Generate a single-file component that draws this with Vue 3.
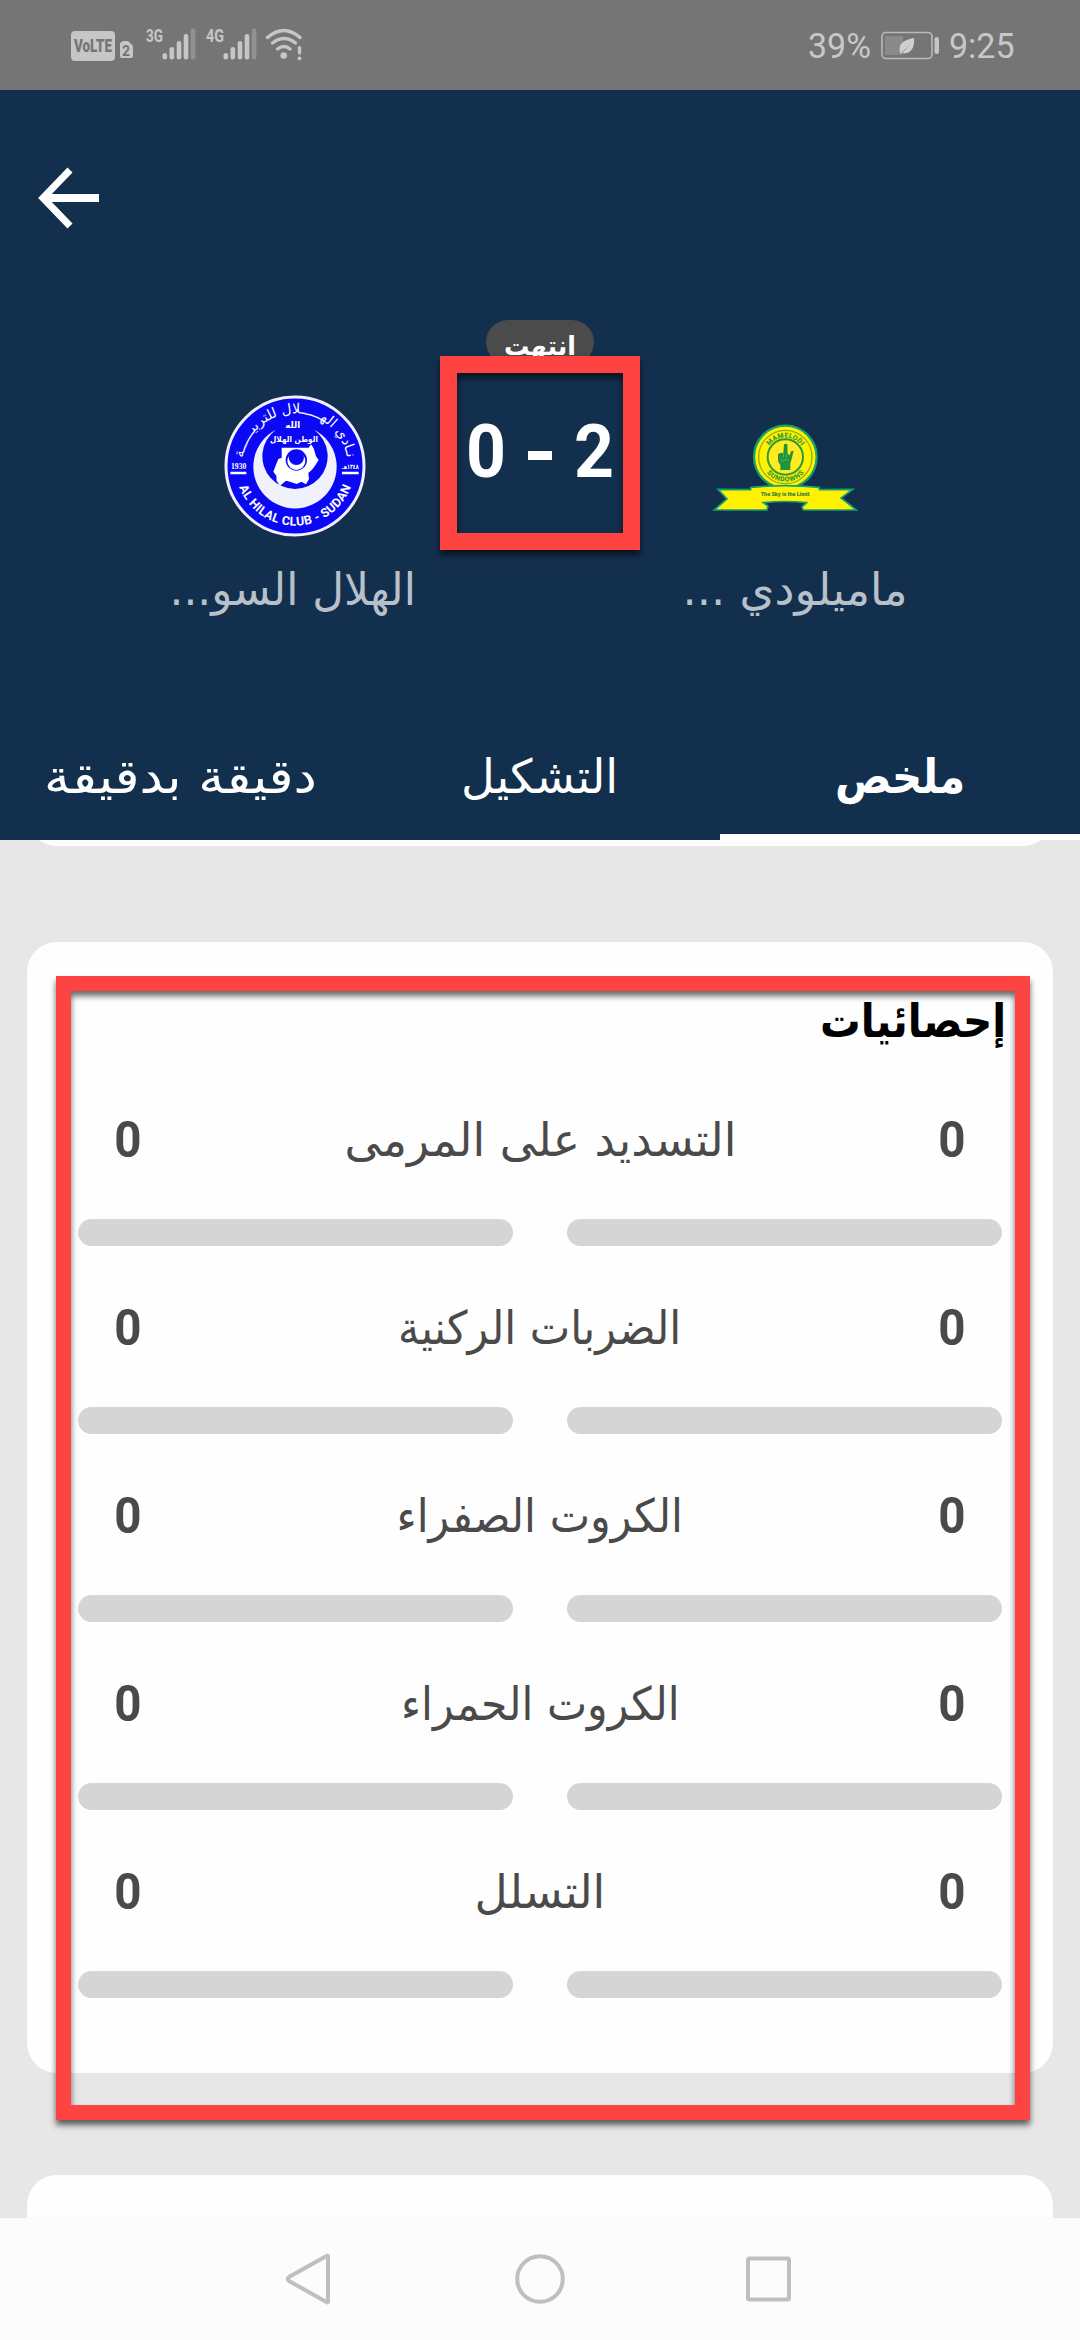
<script setup>
const tabs = [
  { label: 'ملخص', width: 130, active: true },
  { label: 'التشكيل', width: 157 },
  { label: 'دقيقة بدقيقة', width: 273 },
]
const stats = [
  { label: 'التسديد على المرمى', width: 392 },
  { label: 'الضربات الركنية', width: 283 },
  { label: 'الكروت الصفراء', width: 286 },
  { label: 'الكروت الحمراء', width: 279 },
  { label: 'التسلل', width: 131 },
]

// Stretches a label horizontally so that it takes the given width.
const vFit = {
  mounted(el, { value }) {
    el.style.transform = `scaleX(${value / el.offsetWidth})`
  },
}
</script>

<template>
  <div class="screen">
    <div class="status">
      <svg class="signals" width="236" height="40" viewBox="68 25 236 40">
        <g fill="#c6c6c6">
          <rect x="71" y="31" width="44" height="30" rx="4" />
          <path d="M120 43l3-2h5l5 5v10a2 2 0 0 1-2 2h-9a2 2 0 0 1-2-2z" />
          <g font-family="Roboto, sans-serif" font-weight="700">
            <text x="74" y="52" font-size="18" fill="#757575" textLength="38" lengthAdjust="spacingAndGlyphs" font-weight="900">VoLTE</text>
            <text x="122" y="56" font-size="14" fill="#757575">2</text>
            <text x="146" y="42" font-size="19" textLength="17" lengthAdjust="spacingAndGlyphs">3G</text>
            <text x="206" y="42" font-size="19" textLength="18" lengthAdjust="spacingAndGlyphs">4G</text>
          </g>
          <g v-for="x in [162, 223]" :key="x">
            <rect :x="x + 0.5" y="53" width="4.6" height="6.5" rx="2.2" />
            <rect :x="x + 7.5" y="47" width="4.6" height="12.5" rx="2.2" />
            <rect :x="x + 14.7" y="41" width="4.6" height="18.5" rx="2.2" />
            <rect :x="x + 21.7" y="34" width="4.6" height="25.5" rx="2.2" />
            <rect :x="x + 28.8" y="28.5" width="4.6" height="31" rx="2.2" fill="#919191" />
          </g>
          <circle cx="283.7" cy="55.5" r="3.3" />
          <rect x="297.8" y="46" width="3.4" height="8.5" rx="1.5" />
          <circle cx="299.5" cy="58.3" r="1.9" />
        </g>
        <g fill="none" stroke="#c6c6c6" stroke-width="3.4" stroke-linecap="round">
          <path d="M267.500 37.500Q284 23.500 300 37.500" />
          <path d="M272.500 43Q284 34 295.500 43" />
          <path d="M277.500 49Q284 44 290 49" />
        </g>
      </svg>
      <div class="power">
        <span v-fit="63">39%</span>
        <svg width="60" height="30" viewBox="880 31 60 30">
          <rect x="882" y="32.500" width="50" height="26" rx="4" fill="none" stroke="#b9b9b9" stroke-width="1.600" />
          <rect x="885" y="36" width="18" height="19" fill="#8a8a8a" />
          <path d="M900 53c-2-9 3-13 14-15 1 9-3 17-12 15l9-9-11 10z" fill="#cfcfcf" />
          <rect x="934.500" y="37" width="4.500" height="17" rx="2.200" fill="#c6c6c6" />
        </svg>
        <span v-fit="66">9:25</span>
      </div>
    </div>

    <header class="match">
      <svg class="back" width="64" height="64" viewBox="0 0 64 64" fill="none" stroke="#fff" stroke-width="7">
        <path d="M34 5L7 33L34 61" />
        <path d="M7 33H63" stroke-width="8" />
      </svg>

      <div class="teams" dir="rtl">
        <div class="team home">
          <svg width="190" height="130" viewBox="0 0 570 390">
            <circle cx="286" cy="168" r="94" fill="#fff200" stroke="#16a06a" stroke-width="7" />
            <circle cx="286" cy="168" r="80" fill="none" stroke="#8fae1e" stroke-width="4" />
            <circle cx="286" cy="168" r="53" fill="#ffeb1f" stroke="#2f9a3c" stroke-width="6" />
            <path id="sunTop" d="M228 168A58 58 0 0 1 344 168" fill="none" />
            <path id="sunBottom" d="M212 168A74 74 0 0 0 360 168" fill="none" />
            <g font-family="Roboto, sans-serif" font-weight="900" font-size="21" fill="#3c9a35" text-anchor="middle">
              <text><textPath href="#sunTop" startOffset="50%" textLength="112">MAMELODI</textPath></text>
              <text><textPath href="#sunBottom" startOffset="50%" textLength="128">SUNDOWNS</textPath></text>
            </g>
            <path d="M271 207V192L264 181V160L272 155L280 157L282 130Q287 126 292 130L293 158L299 163L303 151L311 149L306 170L301 187V207Z" fill="#1f9440" />
            <path d="M270 176l10 4 8-5 9 5M280 158l1 12M290 160l-1 10" fill="none" stroke="#8fc02c" stroke-width="2" />
            <path d="M182 259Q286 249 388 259V266L488 265L453 291L499 327H340L336 318L350 305Q284 298 220 305L234 315L231 327H73L111 294L84 265L182 266Z" fill="#fff200" stroke="#14a070" stroke-width="5" />
            <text x="285" y="284" font-family="Roboto, sans-serif" font-weight="900" font-size="18" fill="#33803a" text-anchor="middle" textLength="146" lengthAdjust="spacingAndGlyphs" direction="ltr">The Sky is the Limit</text>
          </svg>
          <span v-fit="225" class="name">ماميلودي ...</span>
        </div>

        <div class="result">
          <div class="badge"><span v-fit="72">انتهت</span></div>
          <div class="score" dir="ltr">
            <span>0</span><i></i><span>2</span>
          </div>
        </div>

        <div class="team away">
          <svg width="190" height="190" viewBox="0 0 570 570" direction="ltr">
            <g transform="translate(-15 0)">
              <circle cx="300" cy="291" r="207" fill="#0a08f5" stroke="#f2f0ff" stroke-width="9" />
              <path d="M228 182A125 125 0 1 0 342 182A98 98 0 1 1 228 182Z" transform="translate(15 0)" fill="#f1f1fb" />
              <g transform="translate(15 0)">
                <path d="M245 236H326L333 226L341 238L348 262L356 273L345 290L336 302L325 312L327 330L318 346L304 338L290 345L270 338L258 335L240 350L230 336L229 320L220 308L229 285L235 270L245 266Z" fill="#fff" />
                <circle cx="289" cy="273" r="32" fill="#0a08f5" />
                <circle cx="289" cy="276" r="27" fill="#fff" />
                <circle cx="289" cy="265" r="23" fill="#0a08f5" />
              </g>
              <path d="M106 312h48M441 312h50" stroke="#fff" stroke-width="7" />
              <path id="hilalTop" d="M142 291A158 158 0 0 1 458 291" fill="none" />
              <path id="hilalBottom" d="M121 291A179 179 0 0 0 479 291" fill="none" />
              <g fill="#fff" text-anchor="middle" font-weight="700">
                <text font-family="'DejaVu Sans', sans-serif" font-size="42" font-weight="400"><textPath href="#hilalTop" startOffset="50%">نـادي الهـــــلال للتربيـــــة</textPath></text>
                <text font-family="Roboto, sans-serif" font-size="37"><textPath href="#hilalBottom" startOffset="50%" textLength="434">AL HILAL CLUB - SUDAN</textPath></text>
                <text x="293" y="178" font-family="'DejaVu Sans', sans-serif" font-size="26">الله</text>
                <text x="297" y="220" font-family="'DejaVu Sans', sans-serif" font-size="25" textLength="144" lengthAdjust="spacingAndGlyphs">الوطن الهلال</text>
                <text x="131" y="301" font-family="'Liberation Serif', serif" font-size="23">1930</text>
                <text x="466" y="301" font-family="'DejaVu Sans', sans-serif" font-size="20" textLength="50" lengthAdjust="spacingAndGlyphs">١٣٤٨هـ</text>
              </g>
            </g>
          </svg>
          <span v-fit="246" class="name">الهلال السو...</span>
        </div>
      </div>

      <nav class="tabs" dir="rtl">
        <div v-for="t in tabs" :key="t.label" class="tab" :class="{ active: t.active }">
          <span v-fit="t.width">{{ t.label }}</span>
        </div>
      </nav>
    </header>

    <main class="content">
      <section class="card previous"></section>
      <section class="card stats" dir="rtl">
        <h2><span v-fit="186">إحصائيات</span></h2>
        <div v-for="s in stats" :key="s.label" class="stat">
          <div class="line">
            <b>0</b>
            <span v-fit="s.width" class="label">{{ s.label }}</span>
            <b>0</b>
          </div>
          <div class="bars"><i></i><i></i></div>
        </div>
      </section>
      <section class="card next"></section>
    </main>

    <footer class="navbar">
      <svg width="54" height="54" viewBox="0 0 54 54"><path d="M44 4.500V49.500Q44 51 42.500 50L5 29Q2.500 27 5 25L42.500 4Q44 3 44 4.500Z" /></svg>
      <svg width="54" height="54" viewBox="0 0 54 54"><circle cx="27" cy="27" r="22.800" /></svg>
      <svg width="54" height="54" viewBox="0 0 54 54"><rect x="7" y="6.500" width="41" height="41" rx="1.500" /></svg>
    </footer>

    <div class="mark mark-score"></div>
    <div class="mark mark-stats"></div>
  </div>
</template>

<style>
body {
  margin: 0;
}
</style>

<style scoped>
.screen {
  position: relative;
  display: flex;
  flex-direction: column;
  width: 1080px;
  height: 2340px;
  overflow: hidden;
  background: #e7e7e7;
  font-family: 'DejaVu Sans', sans-serif;
}
.screen span {
  display: inline-block;
  flex: none;
  white-space: nowrap;
}
.status {
  display: flex;
  justify-content: space-between;
  align-items: center;
  box-sizing: border-box;
  height: 90px;
  padding: 0 65px 0 68px;
  background: #757575;
  color: #c8c8c8;
  font: 35px/1 Roboto, sans-serif;
}
.power {
  display: flex;
  align-items: center;
  gap: 8px;
  padding-top: 2px;
}
.match {
  display: flex;
  flex-direction: column;
  height: 750px;
  background: #132f4e;
  color: #fff;
}
.back {
  flex: none;
  margin: 75px 0 0 36px;
}
.teams {
  display: flex;
  justify-content: space-between;
  height: 405px;
  padding: 0 170px;
}
.team {
  display: flex;
  flex-direction: column;
  align-items: center;
  justify-content: flex-end;
  width: 250px;
  height: 392px;
}
.team svg {
  flex: none;
}
.home svg {
  margin-bottom: 28px;
}
.home .name {
  margin-left: 20px;
}
.away .name {
  margin-right: 4px;
}
.name {
  color: #b8c1ca;
  font-size: 45px;
  line-height: 62px;
}
.result {
  display: flex;
  flex-direction: column;
  align-items: center;
  width: 200px;
  padding-top: 91px;
}
.badge {
  display: flex;
  justify-content: center;
  width: 108px;
  height: 44px;
  border-radius: 22px;
  background: #4b4b4b;
  font-weight: 700;
  font-size: 26px;
  line-height: 52px;
}
.score {
  display: flex;
  align-items: center;
  justify-content: center;
  gap: 20px;
  height: 80px;
  margin-top: 47px;
  font: 700 75px/80px Roboto, sans-serif;
}
.score span {
  width: 44px;
  text-align: center;
  transform: scaleX(0.93);
}
.score i {
  width: 24px;
  height: 9px;
  margin-top: 9px;
  background: #fff;
}
.tabs {
  display: flex;
  margin-top: auto;
  height: 110px;
}
.tab {
  display: flex;
  flex: 1;
  justify-content: center;
  box-sizing: border-box;
  font-size: 47px;
  line-height: 94px;
  border-bottom: 6px solid transparent;
}
.active {
  border-color: #fff;
  font-weight: 700;
}
.content {
  display: flex;
  flex-direction: column;
  height: 1378px;
  padding: 0 27px;
  overflow: hidden;
}
.card {
  flex: none;
  box-sizing: border-box;
  border-radius: 30px;
  background: #fefefe;
}
.previous {
  height: 60px;
  margin-top: -54px;
}
.stats {
  height: 1131px;
  margin-top: 96px;
  padding: 49px 51px 0;
}
.next {
  height: 200px;
  margin-top: 102px;
}
h2 {
  height: 67px;
  margin: 0 -4px 0 0;
  color: #000;
  font-size: 46px;
  line-height: 60px;
}
h2 span {
  transform-origin: right;
}
.stat {
  height: 136px;
  padding-top: 52px;
}
.line {
  display: flex;
  justify-content: space-between;
  height: 60px;
  padding: 0 35px;
  color: #4a4a4a;
  font-size: 46px;
  line-height: 60px;
}
.line b {
  width: 30px;
  font: 700 50px/60px Roboto, sans-serif;
  text-align: center;
  transform: scaleX(0.95);
}
.bars {
  display: flex;
  gap: 54px;
  margin-top: 49px;
}
.bars i {
  flex: 1;
  height: 27px;
  border-radius: 14px;
  background: #d5d5d5;
}
.navbar {
  display: flex;
  justify-content: space-between;
  align-items: center;
  box-sizing: border-box;
  height: 122px;
  padding: 0 285px 0 284px;
  background: #fcfcfc;
}
.navbar svg {
  fill: none;
  stroke: #bfbfbf;
  stroke-width: 4;
}
.mark {
  position: absolute;
  box-sizing: border-box;
  border: 15px solid #fe4343;
  box-shadow: 0 5px 6px rgba(0, 0, 0, 0.6), inset 0 5px 6px rgba(0, 0, 0, 0.6);
}
.mark-score {
  left: 440px;
  top: 356px;
  width: 200px;
  height: 194px;
  border-width: 17px;
}
.mark-stats {
  left: 56px;
  top: 976px;
  width: 974px;
  height: 1144px;
}
</style>
